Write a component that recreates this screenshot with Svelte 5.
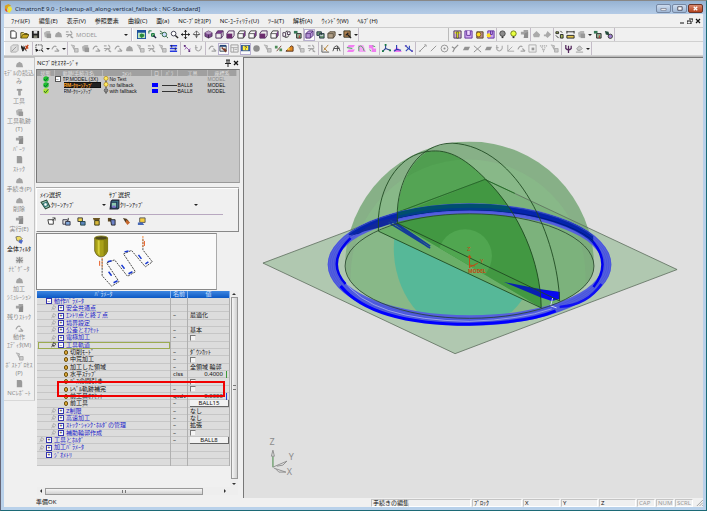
<script>
  const icons = {
    doc: '<path d="M2 1h4l2 2v6H2z" fill="#fff" stroke="#222"/>',
    open: '<path d="M1 9V3h3l1 1h3v2" fill="#ffe870" stroke="#443a00"/><path d="M1 9l2-4h7L8 9z" fill="#c8a820" stroke="#443a00" stroke-width=".8"/>',
    save: '<path d="M1 1h8v8H1z" fill="#222"/><path d="M3 1h4v3H3z" fill="#ddd"/><path d="M3 6h4v3H3z" fill="#887"/>',
    gcube: '<path d="M1 3l3-2h4v4L6 8H2z" fill="#b4b4b4"/><path d="M4 4h5v5H4z" fill="#989898"/>',
    gblob: '<path d="M1 7l1-3 3-2 3 2 1 4H2z" fill="#a4a4a4"/>',
    ggrid: '<path d="M1 2h3M6 1l2 3M1 5h7M2 8l3-3 4 4M7 6v3" stroke="#a8a8a8" fill="none" stroke-width="1.3"/>',
    gtool: '<path d="M1 1l4 1-1 4M3 3l3 4M5 5h4v4H5z" stroke="#aaa" fill="#ccc"/>',
    gcurve: '<path d="M1 6q2-5 5-3M4 8h5M6 5l3 3" stroke="#a2a2a2" fill="none" stroke-width="1.3"/>',
    fit: '<path d="M0 0h10v10H0z" fill="#1b4f9c"/><path d="M1 3h8v6H1z" fill="#bfe6bf"/><path d="M3 5l2-1 3 1v2L5 9 3 7z" fill="#288a3c"/>',
    zoomin: '<path d="M1 1h3M1 1v3M4 4h3v3H4z" stroke="#063" fill="#8c8"/><path d="M6 6l3 3" stroke="#224" stroke-width="1.5"/>',
    zoomall: '<circle cx="6" cy="5" r="2.5" fill="#cdf" stroke="#286038"/><path d="M1 1l3 2M8 7l2 2M1 4h2" stroke="#286038"/>',
    zoom: '<circle cx="4" cy="4" r="2.6" fill="#fff" stroke="#334"/><path d="M6 6l3 3" stroke="#222" stroke-width="1.5"/>',
    pan: '<path d="M5 0v10M0 5h10" stroke="#222"/><path d="M5 0L3 2h4zM5 10L3 8h4zM0 5l2-2v4zM10 5L8 3v4z" fill="#222"/>',
    rotate: '<path d="M5 1v8M1 5h8M2 4l3-3 3 3-3 4z" stroke="#444" fill="#fff" stroke-width=".8"/>',
    cube: '<path d="M5 1l4 2v4L5 9 1 7V3z" fill="#7b4a8e" stroke="#2c1738" stroke-width=".7"/><path d="M5 1l4 2-4 2-4-2z" fill="#b79ac4"/><path d="M5 5v4" stroke="#2c1738" stroke-width=".7"/>',
    cubet: '<path d="M1 4l2-3h6v5L7 9H1z" fill="#eee" stroke="#4a2858"/><path d="M1 4l2-3h6L7 4z" fill="#7b3a8e" stroke="#4a2858" stroke-width=".5"/><path d="M7 4v5" stroke="#4a2858"/>',
    cubef: '<path d="M1 4l2-3h6v5L7 9H1z" fill="#eee" stroke="#4a2858"/><path d="M1 4h6v5H1z" fill="#6b2a6e"/>',
    cuber: '<path d="M1 4l2-3h6v5L7 9H1z" fill="#fafafa" stroke="#333"/><path d="M7 4l2-3v5L7 9z" fill="#7b3a8e"/><path d="M1 4h6v5" fill="none" stroke="#333" stroke-width=".8"/>',
    shade: '<path d="M1 4l3-3h5v5L6 9H1z" fill="#b594d6" stroke="#4b2b70"/><path d="M1 4h5v5M6 4l3-3" fill="none" stroke="#4b2b70" stroke-width=".8"/>',
    swap: '<path d="M1 3h3v4H1zM6 2h3v3H6z" fill="#fff" stroke="#423048"/><path d="M3 8q3 1 5-2M4 2l2-1" fill="none" stroke="#222"/>',
    layers: '<path d="M1 2h5v4H1zM4 4h5v5H4z" fill="#6d9a74" stroke="#234"/><path d="M4 6h4" stroke="#dde"/>',
    box: '<path d="M1 4l2-2h6v4L7 9H1z" fill="#b0a088" stroke="#4d4436"/><path d="M1 4h6v5" fill="none" stroke="#4d4436" stroke-width=".8"/>',
    render: '<path d="M1 1h7v7H1z" fill="#b08050" stroke="#332"/><path d="M3 6l3-3M5 5l4 4" stroke="#222" stroke-width="1.4"/>',
    u1: '<path d="M1 1h8v8H1z" fill="#c9a2d0" stroke="#4c3458"/><path d="M2 2h6v2H2z" fill="#e7e42a"/><path d="M4 2h2v7H4z" fill="#e7e42a" stroke="#222" stroke-width=".6"/>',
    u2: '<path d="M1 1h8v8H1z" fill="#d0a6f0" stroke="#5c2c98"/><path d="M3 1v5h4V1" fill="#f2d8ff" stroke="#5c2c98"/>',
    u3: '<path d="M2 2h7v7H2z" fill="#b88" stroke="#542"/><circle cx="4" cy="5" r="2.5" fill="#fd2" stroke="#641" stroke-width=".7"/>',
    u4: '<path d="M2 1h7v8H2z" fill="#c7a0f0" stroke="#5c2c98"/><circle cx="3" cy="6" r="2.3" fill="#fd2"/><path d="M5 1v4h2V1" stroke="#5c2c98" fill="none"/>',
    bulboff: '<circle cx="5" cy="4" r="3" fill="#8c8c8c" stroke="#444"/><path d="M4 7h2v2H4z" fill="#333"/>',
    bulb: '<circle cx="5" cy="4" r="3" fill="#e8ff40" stroke="#6a7a10"/><path d="M4 7h2v2H4z" fill="#333"/>',
    lamp: '<circle cx="5" cy="4" r="3.4" fill="#ffe860" stroke="#a07808"/><path d="M4 8h2v2H4z" fill="#543"/>',
    gleft: '<path d="M1 5l4-4 4 4-1 3H2z" fill="#aaa"/>',
    gright: '<path d="M1 5h2l2-4 4 4-4 4-2-2H1z" fill="#aaa"/>',
    meas: '<path d="M1 2h3v2H1zM6 1l2 2M1 6l3 3M6 5h3v4H6z" stroke="#222" fill="#a7b85a"/>',
    dim: '<path d="M1 1v3M9 1v3M1 2h8M1 6h8v3H1z" stroke="#222" fill="#e3c44a"/>',
    tree1: '<path d="M1 1h4v3H1z" fill="#375"/><path d="M4 4h5v5H4z" fill="#9b9" stroke="#222"/><path d="M7 6v3" stroke="#b22"/>',
    tree2: '<path d="M1 1l4 1 1 4-4-1z" fill="#234a3a"/><circle cx="7" cy="7" r="2.4" fill="#a080d0" stroke="#333"/>',
    cursorx: '<path d="M0 2l4 3-2 3zM3 2l3 6" fill="#222" stroke="#222"/><path d="M5 2l3 3M8 1L5 6" stroke="#c43c10" stroke-width="1.4"/>',
    select: '<path d="M1 1h7v6H1z" fill="none" stroke="#333" stroke-dasharray="1.5 1"/><path d="M1 5v4l3-2z" fill="#111"/><path d="M7 6l2 3" stroke="#111"/>',
    bars: '<path d="M1 2h8M1 5h8M1 8h8" stroke="#2438e0" stroke-width="1.8"/><path d="M3 1v3M7 4v3" stroke="#223"/>',
    graph: '<path d="M1 2l3 2-2 2M4 4l3 3 1-2" fill="none" stroke="#8d51ac"/><path d="M1 1h2v2H1zM6 7h2v2H6z" fill="#62327e"/>',
    tbl: '<path d="M1 1h8v8H1z" fill="#eee" stroke="#999"/><path d="M1 4h8M4 4v5M5 6h3" stroke="#aaa"/>',
    editbox: '<path d="M1 2h7v6H1z" fill="#eee" stroke="#345"/><path d="M1 1h7v2H1z" fill="#247"/><path d="M3 4l5 5M6 5l2 3" stroke="#7b3a28" stroke-width="1.6"/>',
    help: '<path d="M0 1h10v7H0z" fill="#345a9e"/><path d="M2 2h6v5H2z" fill="#ffec40"/><path d="M4 3h2v1L5 5M5 6v.6" stroke="#222" fill="none" stroke-width=".8"/>',
    gball: '<circle cx="5" cy="5" r="3.6" fill="#8e8e8e"/>',
    link: '<path d="M1 2h3v3H1zM6 5h3v3H6z" fill="#4d8b58"/><path d="M3 8l5-6" stroke="#743"/>',
    wedge: '<path d="M1 8l6-6 2 1v5H1z" fill="#e08820" stroke="#532"/><path d="M2 6l3-3v4z" fill="#f8cf4c"/>',
    sketch: '<path d="M1 1v8h8" stroke="#555" fill="none"/><path d="M3 7l5-6M3 4l4 4" stroke="#b07a28"/>',
    arcs: '<path d="M1 8q1-6 4-6t4 6M2 5h6M6 2v6" stroke="#444" fill="none"/>',
    pink1: '<path d="M3 1h7L8 4H1zM3 6h7L8 9H1z" fill="#f27df2"/><path d="M1 4l6 1" stroke="#32a050"/>',
    pink2: '<path d="M1 1h6l3 8H2z" fill="#f6a6f6"/><path d="M2 3q4-3 6 5M2 3v5" stroke="#4ba75a" fill="none"/>',
    pink3: '<path d="M1 1h5v4H1zM4 5h5v4H4z" fill="#f07df0"/><path d="M5 2l3 1M2 6l1 2" stroke="#4ba75a"/>',
    ax1: '<path d="M4 1v4L1 8M4 5l5 2" stroke="#284090" fill="none" stroke-width="1.2"/><path d="M3 0h2v2H3zM0 7h2v2H0zM8 6h2v2H8z" fill="#167a40"/>',
    ax2: '<path d="M1 6l4-2 5 5H2z" fill="#f27df2"/><path d="M4 1v5L1 8M4 6l5 1" stroke="#2438b0" fill="none" stroke-width="1.2"/>',
    ax3: '<path d="M2 2l3 3-3 3M5 5l4 3M6 2v3" stroke="#3048b8" fill="none" stroke-width="1.2"/><path d="M1 1h2v2H1zM8 7h2v2H8z" fill="#6858c0"/>',
    gline: '<path d="M2 8l6-6M7 1h2v2M1 8h2" stroke="#8e8e8e" fill="none"/>',
    gslash: '<path d="M2 8l6-6" stroke="#8e8e8e"/>',
    gcirc: '<circle cx="5" cy="5" r="3.8" fill="none" stroke="#8e8e8e"/><circle cx="5" cy="5" r="1.2" fill="#8e8e8e"/>',
    gbox: '<path d="M1 3l2-2h6v6L7 9H1z" fill="#ddd" stroke="#aaa"/><path d="M2 8l5-5" stroke="#999"/>',
    gy: '<path d="M1 3l3 2 4-4M4 5L2 9" stroke="#8e8e8e" fill="none" stroke-width="1.3"/>',
    gpar: '<path d="M3 3h6L7 7H1z" fill="#929292"/>',
    gx: '<path d="M1 2l8 7M9 2L1 9" stroke="#929292" stroke-width="1.1"/>',
    gu: '<path d="M2 1v5q3 4 6-1V2M1 4h3" stroke="#aaa" fill="none" stroke-width="1.2"/>',
    gaxis: '<path d="M2 1v7h7M2 8l5-5" stroke="#a6a6a6" fill="none"/>',
    gsq: '<path d="M1 1h8v8H1z" fill="none" stroke="#aaa"/><path d="M4 4h3v3H4z" fill="#999"/>',
    gdots: '<path d="M1 2h8M3 3l2 5 2-5" stroke="#aaa" fill="none" stroke-dasharray="1.4 .8" stroke-width="1.3"/>',
    psi: '<path d="M2 1v4q3 3 6 0V2M5 2v8" stroke="#53285c" fill="none" stroke-width="1.4"/>',
    bucket: '<path d="M2 5l3-3 3 3-2 2H3zM1 9h8" stroke="#999" fill="#ccc"/>',
    ham: '<path d="M2 1h6v2H2z" fill="#999"/><path d="M4 3h2v5H4z" fill="#aaa" stroke="#888" stroke-width=".6"/>',
    filt: '<path d="M1 1l4-1 3 3-3 3-3-1z" fill="#f0dc60" stroke="#444" stroke-width=".7"/><path d="M5 4l4 1-2 4-3-2z" fill="#4d69c8"/>',
    gstar: '<path d="M1 1h8v7H1z" fill="#ccc"/><path d="M5 1v7M1 5h8M2 2l6 5M8 2L2 7" stroke="#8a8a8a"/>',
    gpage: '<path d="M2 0h5l1 2v6H2z" fill="#9a9a9a"/>',
    gpart: '<path d="M1 2h3V0h5v6l-2 3-3-4H1z" fill="#a2a2a2"/><path d="M5 4l4-2v7H4z" fill="#8c8c8c"/>',
    n1: '<path d="M1 3h6v5H2z" fill="#fff" stroke="#333"/><path d="M6 4l3-3M6 1h3v3" stroke="#444" fill="none"/>',
    n2: '<path d="M1 3h5v5H1z" fill="#ddd" stroke="#334"/><path d="M4 5h5v4H4z" fill="#7fa6d8" stroke="#334"/><path d="M7 1v3" stroke="#333"/>',
    n3: '<path d="M1 1h5v4H1z" fill="#efd34b" stroke="#333"/><path d="M4 5h5v4H4z" fill="#5c86bd" stroke="#244"/>',
    n4: '<path d="M1 1h8L8 4H2z" fill="#6b5520"/><path d="M3 4h5v5H3z" fill="#d8b83a" stroke="#331"/>',
    n5: '<path d="M1 1h4v4H1z" fill="#5a4620"/><path d="M4 3h5v6H5z" fill="#6d83c8" stroke="#222"/>',
    n6: '<path d="M1 1l4 1 3 3-4 1z" fill="#4d3a20"/><path d="M5 3l4 3-3 3-2-3z" fill="#c6672c"/>',
    n7: '<path d="M3 1h6v5H3z" fill="#f4cd40" stroke="#555"/><path d="M1 6h5l2 3H1z" fill="#4669b8"/>',
    proc: '<path d="M1 3l5-2 3 6-4 2z" fill="#9fc7b2" stroke="#284838"/><path d="M3 4l3-1 1 3-3 1z" fill="#fff" stroke="#377"/>',
    proc2: '<path d="M2 2l1-1h6v7L8 9H1z" fill="#3d7b8c" stroke="#223"/><path d="M2 3h5v5H2z" fill="#8dc7ae" stroke="#235"/><path d="M3 6h3v2H3z" fill="#7d6ccb"/>',
    ok: '<circle cx="5" cy="5" r="4.6" fill="#20c030"/><path d="M2 5l2 3 5-6" fill="none" stroke="#063" stroke-width="1.4"/>',
    ok2: '<circle cx="5" cy="5" r="4.6" fill="#a8e830"/><path d="M2 5l2 3 5-6" fill="none" stroke="#253" stroke-width="1.4"/>'
  };

  const menus = ['ﾌｧｲﾙ(F)', '編集(E)', '表示(V)', '参照要素', '曲線(C)', '面(a)', 'NC-ﾌﾟﾛｾｽ(P)', 'NC-ﾕｰﾃｨﾘﾃｨ(U)', 'ﾂｰﾙ(T)', '解析(A)', 'ｳｨﾝﾄﾞｳ(W)', 'ﾍﾙﾌﾟ(H)'];

  // '*' marks a pressed button, '+' one with a drop-down arrow
  const files = [['doc', 'open', 'save']];
  const views = [
    ['fit', 'zoomin', 'zoomall', 'zoom', 'pan', 'rotate'],
    ['cube', 'cubet', 'cubef', 'cuber', 'cuber', 'cubef', 'cuber'],
    ['swap', 'tree1'],
    ['*shade', 'layers', '+box', '+render']
  ];
  const nc = [['u1', 'u2', 'u3', 'u4'], ['bulboff', 'bulb', 'gpart'], ['gleft', 'gright'], ['meas', 'dim', '+gcube', 'tree1', 'tree2']];
  const row2 = [
    ['gbox', 'cursorx'],
    ['+select', '+gcurve'],
    ['gtool', 'gcube', 'gcurve', 'ggrid', 'gcurve', 'gblob', 'gtool', 'ggrid', 'gtool', 'bars'],
    ['graph', 'gu'],
    ['gcurve', '*editbox', 'tbl', '*help', 'gball', 'gtool', 'link', 'wedge', 'gtool', 'ggrid'],
    ['sketch', 'arcs'],
    ['pink1', 'pink2', 'pink3'],
    ['ax1', 'ax2', 'ax3'],
    ['gline', 'gslash', 'gcirc', 'gy', 'gpar', 'gx', 'gpar', 'gu', 'gaxis', 'gcurve', 'gsq', 'gdots', 'gtool'],
    ['psi', '+bucket']
  ];

  const side = [
    ['gblob', 'ﾓﾃﾞﾙの読込', 'み'], ['ham', '工具'], ['gcube', '工具軌跡', '(T)'], ['gpart', 'ﾊﾟｰﾂ'],
    ['gpage', 'ｽﾄｯｸ'], ['gblob', '手続き(P)'], ['gblob', '削除'], ['gpart', '実行(E)'],
    ['filt', '全体ﾌｨﾙﾀ'], ['gstar', 'ﾅﾋﾞｹﾞｰﾀ'], ['gblob', '加工', 'ｼﾐｭﾚｰｼｮﾝ'], ['gpart', '残りｽﾄｯｸ'],
    ['gcurve', '動作', 'ｴﾃﾞｨﾀ(M)'], ['gtool', 'ﾎﾟｽﾄﾌﾟﾛｾｽ', '(P)'], ['gpage', 'NCﾚﾎﾟｰﾄ']
  ];

  const procs = [
    { st: 'ok', name: 'TP,MODEL (3X)', lamp: 'lamp', note: 'No Text', tool: '', ucs: 'MODEL', root: true },
    { st: 'ok', name: 'RM-ｸﾘｰﾝｱｯﾌﾟ', lamp: 'lamp', note: 'no fallback', tool: 'BALL8', ucs: 'MODEL', sel: true },
    { st: 'ok2', name: 'RM-ｸﾘｰﾝｱｯﾌﾟ', lamp: 'bulboff', note: 'with fallback', tool: 'BALL8', ucs: 'MODEL' }
  ];

  // l: depth, k: + closed, - open, o leaf; u: unit column; v: value; c: tick box; b: button
  const params = [
    { l: 0, k: '-', n: '動作ﾊﾟﾗﾒｰﾀ' },
    { l: 1, k: '+', n: '安全共通点' },
    { l: 1, k: '+', n: 'ｴﾝﾄﾘ点と終了点', u: '–', v: '最適化' },
    { l: 1, k: '+', n: '境界設定' },
    { l: 1, k: '+', n: '公差とｵﾌｾｯﾄ', u: '–', v: '基本' },
    { l: 1, k: '+', n: '電極加工', u: '–', c: true },
    { l: 1, k: '-', n: '工具軌道', focus: true },
    { l: 2, k: 'o', n: '切削ﾓｰﾄﾞ', u: '–', v: 'ﾀﾞｳﾝｶｯﾄ' },
    { l: 2, k: 'o', n: '中荒加工', u: '–', c: true },
    { l: 2, k: 'o', n: '加工した領域', u: '–', v: '全領域 輪郭' },
    { l: 2, k: 'o', n: '水平ｽﾃｯﾌﾟ', u: 'clss', v: '0.4000', num: 'green' },
    { l: 2, k: 'o', n: 'ﾊﾟｽの間引き', u: '–', c: true },
    { l: 2, k: 'o', n: 'ﾚﾍﾞﾙ軌跡補完', u: '–', c: true, mark: true },
    { l: 2, k: 'o', n: '前工具ｵﾌｾｯﾄ', u: 'qcdv', v: '0.0000', num: 'blue' },
    { l: 2, k: 'o', n: '前工具', u: '–', b: 'BALL15' },
    { l: 1, k: '+', n: 'Z制限', u: '–', v: 'なし' },
    { l: 1, k: '+', n: '高速加工', u: '–', v: 'なし' },
    { l: 1, k: '+', n: 'ｽﾄｯｸ･ｼｬﾝｸ･ﾎﾙﾀﾞの管理', u: '–', v: '拡張' },
    { l: 1, k: '+', n: '補助輪郭作成', u: '–', c: true },
    { l: 0, k: '+', n: '工具とﾎﾙﾀﾞ', u: '–', b: 'BALL8', pin: true },
    { l: 0, k: '+', n: '加工ﾊﾟﾗﾒｰﾀ', pin: true },
    { l: 0, k: '+', n: 'ｼﾞｵﾒﾄﾘ' }
  ];

  const rings = [136, 138, 140, 142];
  let picked = $state('ｸﾘｰﾝｱｯﾌﾟ');
</script>

{#snippet icon(name)}
  <svg class="ic" viewBox="0 0 10 10" aria-hidden="true">{@html icons[name]}</svg>
{/snippet}

{#snippet groups(list)}
  {#each list as g}
    <div class="group">
      {#each g as raw}
        {@const name = raw.replace(/[*+]/, '')}
        <button class="tb" class:on={raw[0] === '*'} class:drop={raw[0] === '+'} aria-label={name}>
          {@render icon(name)}
          {#if raw[0] === '+'}<i class="arrow"></i>{/if}
        </button>
      {/each}
    </div>
  {/each}
{/snippet}

<div class="window">
  <header class="title">
    <svg class="logo" viewBox="0 0 10 10" aria-hidden="true"><path d="M1 2l4-2 3 2-3 1-2 3 1 3-3-2z" fill="#d8a020" /><path d="M4 3l4 0 1 3-3 4-3-2 2-2z" fill="#f0e838" /><path d="M1 5l2 1 1 3-2-1z" fill="#e04830" /></svg>
    <h1>CimatronE 9.0 - [cleanup-all_along-vertical_fallback : NC-Standard]</h1>
    <div class="winbtns">
      <button aria-label="minimize"><svg viewBox="0 0 14 8"><path d="M4 4h6v2H4z" fill="#fff" stroke="#556" stroke-width=".6" /></svg></button>
      <button aria-label="maximize"><svg viewBox="0 0 14 8"><path d="M5 2h5v4H5z" fill="#fff" stroke="#445" /></svg></button>
      <button class="close" aria-label="close"><svg viewBox="0 0 14 8"><path d="M5 2l4 4M9 2L5 6" stroke="#fff" stroke-width="1.5" /></svg></button>
    </div>
  </header>

  <div class="client">
    <nav class="menu">
      {#each menus as m}<button>{m}</button>{/each}
      <div class="mdi">
        <button aria-label="minimize document"><svg viewBox="0 0 6 6"><path d="M1 5h4" stroke="#111" /></svg></button>
        <button aria-label="restore document"><svg viewBox="0 0 6 6"><path d="M2 1h4v3M0 3h4v3H0z" fill="none" stroke="#111" /></svg></button>
        <button aria-label="close document"><svg viewBox="0 0 6 6"><path d="M1 1l4 4M5 1L1 5" stroke="#111" stroke-width="1.2" /></svg></button>
      </div>
    </nav>

    <div class="bar first">
      <div class="band">{@render groups(files)}
        <div class="group">
          {#each ['gcube', 'gblob', 'ggrid'] as n}<button class="tb" disabled aria-label={n}>{@render icon(n)}</button>{/each}
          <div class="combo">
            <select aria-label="UCS" disabled><option>MODEL</option></select><i class="arrow"></i>
          </div>
        </div>
      </div>
      <div class="band">{@render groups(views)}</div>
      <div class="band far">{@render groups(nc)}</div>
    </div>
    <div class="bar second">
      <div class="band">{@render groups(row2)}</div>
    </div>

    <main>
      <aside class="side">
        {#each side as [ic, a, b], i}
          <button class:live={i === 8}>{@render icon(ic)}<span>{a}</span>{#if b}<span>{b}</span>{/if}</button>
        {/each}
      </aside>

      <section class="dock">
        <div class="dockhead">
          <h2>NCﾌﾟﾛｾｽﾏﾈｰｼﾞｬ</h2>
          <svg viewBox="0 0 16 8" aria-hidden="true"><path d="M2 1h4M3 1v3M5 1v3M1 4.5h6M4 5v3" stroke="#222" fill="none" /><path d="M10 2l4 4M14 2l-4 4" stroke="#111" stroke-width="1.3" /></svg>
        </div>
        <div class="list">
          <table>
            <thead><tr><th class="c1">状態</th><th class="c2">軌跡/手続き名</th><th class="c3">ｺﾒﾝﾄ</th><th class="c4">ロ</th><th class="c5">ﾊﾟﾗ</th><th class="c6">工具</th><th>座標系</th></tr></thead>
            <tbody>
              {#each procs as p}
                <tr>
                  <td class="c1">{@render icon(p.st)}</td>
                  <td class="c2"><div class="pn">{#if p.root}<i class="box">−</i>{/if}<span class:root={p.root} class:sel={p.sel}>{p.name}</span></div></td>
                  <td class="c3"><div class="note">{@render icon(p.lamp)}{p.note}</div></td>
                  <td>{#if p.tool}<i class="swatch"></i>{/if}</td>
                  <td>{#if p.tool}<i class="dash"></i>{/if}</td>
                  <td>{p.tool}</td>
                  <td class:dim={p.root}>{p.ucs}</td>
                </tr>
              {/each}
            </tbody>
          </table>
        </div>

        <div class="choose">
          <div class="picks">
            <div class="pick">
              <label for="main-pick">ﾒｲﾝ選択</label>
              <div class="field">{@render icon('proc')}<select id="main-pick" bind:value={picked}><option>ｸﾘｰﾝｱｯﾌﾟ</option></select><i class="arrow"></i></div>
            </div>
            <div class="pick wide">
              <label for="sub-pick">ｻﾌﾞ選択</label>
              <div class="field">{@render icon('proc2')}<select id="sub-pick" bind:value={picked}><option>ｸﾘｰﾝｱｯﾌﾟ</option></select><i class="arrow"></i></div>
            </div>
          </div>
          <div class="actions">
            {#each ['n1', 'n2', 'n3', 'n4', 'n5', 'n6', 'n7'] as n}<button class="tb" aria-label={n}>{@render icon(n)}</button>{/each}
          </div>
        </div>

        <div class="preview">
          <svg viewBox="38 233 180 55" role="img" aria-label="toolpath preview">
            <path d="M96 237v13q2 6 6.500 6t6.500-6v-13z" fill="#a8a018" stroke="#4f4a08" stroke-width=".7" />
            <path d="M99 237v15l2 3v-18z" fill="#d6cf3a" />
            <path d="M105 238h4v12l-4 5z" fill="#8b8410" />
            <ellipse cx="102.500" cy="237" rx="6.500" ry="2" fill="#4e4a20" stroke="#8b8410" stroke-width=".8" />
            <path d="M103.500 258V275L113 285.500 120.500 281 108 262 116 259 129 275.500 137 271 125 253 133 249.500 147 266 154 261 144.500 249V237" fill="none" stroke="#333" stroke-width=".9" stroke-dasharray="2 1" />
            <path d="M103.500 257v10M144.500 235v12" stroke="#f48a40" stroke-dasharray="2 1" /><path d="M101 260v5M146 240v5" stroke="#e85a20" />
            <path d="M109 261l4-1M126 251l4-1M110 271l3 4M115 282l4-2M123 264l3 4M130 273l4-2M140 254l3 4M147 263l3-2" stroke="#1838d0" stroke-width="1.500" />
          </svg>
        </div>

        <div class="tree">
          <div class="treebody">
            <table>
              <thead><tr><th class="p1">ﾊﾟﾗﾒｰﾀ</th><th class="p2">名前</th><th>値</th></tr></thead>
              <tbody>
                {#each params as p, i}
                  <tr class:leaf={p.l === 2}>
                    <td class="p1">
                      <div class="name l{p.l}" class:focus={p.focus}>
                        {#if p.l === 1 || p.pin}<svg class="pin" class:dark={p.focus} viewBox="0 0 6 6" aria-hidden="true"><path d="M0 6l2-2M1 3l3 2M3 0l3 2-2 2-2-1z" fill="none" stroke="currentColor" /></svg>{/if}
                        {#if p.k === 'o'}<i class="knob"></i>{:else}<i class="box blue">{p.k === '+' ? '+' : '−'}</i>{/if}
                        <label for={'v' + i}>{p.n}</label>
                      </div>
                      {#if p.mark}<div class="mark"></div>{/if}
                    </td>
                    <td>{p.u ?? ''}</td>
                    <td>
                      {#if p.c}<input id={'v' + i} type="checkbox" />
                      {:else if p.b}<button id={'v' + i} class="val">{p.b}</button>
                      {:else if p.num}<output id={'v' + i} class="num {p.num}">{p.v}</output>
                      {:else}<output id={'v' + i}>{p.v ?? ''}</output>{/if}
                    </td>
                  </tr>
                {/each}
                <tr class="leaf"><td></td><td></td><td></td></tr>
              </tbody>
            </table>
            <div class="vscroll"><i class="up"></i><div class="thumb"><span></span></div><i class="down"></i></div>
          </div>
          <div class="hscroll"><i class="left"></i><div class="thumb"><span></span></div><i class="right"></i></div>
        </div>
      </section>

      <section class="view">
        <svg viewBox="244 57 459 442" role="img" aria-label="3D view">
          <defs>
            <clipPath id="dome"><path d="M344.500 266a125 125 0 0 1 250 0a125 53 0 0 1-250 0z" /></clipPath>
            <clipPath id="cut"><path d="M397 223C397 190 408 163 427 151C450 147 468 161 485 178C520 212 541 262 541.500 308L397 223z" /></clipPath>
            <clipPath id="back"><path d="M348 140h246v112l-60-20L378 231l-30 4z" /></clipPath>
          </defs>
          <path d="M262 263L455 354 678 269.500 485 179z" fill="#b0c8b0" />
          <g clip-path="url(#dome)">
            <path d="M340 136h260v190H340z" fill="#87b087" />
            <circle cx="468" cy="277" r="118" fill="#88b888" />
            <path d="M378 231L485 179 678 269.500 560 303z" fill="#6cab6c" opacity=".4" />
            <path d="M394 238C391 265 400 294 418 313Q440 319 470 319Q500 318 512 312Q518 306 523 299z" fill="#56b898" />
          </g>
          <path d="M397 223L560 301 541.500 308 378 231z" fill="#6aaf68" />
          <path d="M397 223C397 190 408 163 427 151C450 147 468 161 485 178C520 212 541 262 541.500 308L541 292z" fill="#509e50" />
          <g clip-path="url(#cut)">
            <circle cx="468" cy="277" r="118" fill="#54a454" />
            <path d="M378 222L485 179 678 269.500 541 310z" fill="#429842" />
            <circle cx="465" cy="256" r="27" fill="#50a650" />
          </g>
          <path d="M262 263L455 354 678 269.500 485 179z" fill="none" stroke="#5c6c5c" stroke-width=".8" />
          <path d="M397 212L485 179 515 193" fill="none" stroke="#1d7020" stroke-width=".9" />

          <path fill-rule="evenodd" d="M327 264.500a142.500 61.500 0 0 1 285 0a142.500 61.500 0 0 1-285 0zM336 264.500a133.500 51 0 0 0 267 0a133.500 51 0 0 0-267 0z" fill="#5560dc" />
          {#each rings as r}
            <ellipse cx="469.500" cy="264.500" rx={r} ry={r - 82} fill="none" stroke="#2838e0" stroke-width=".5" opacity=".6" />
          {/each}
          <path d="M340 286Q372 324.500 469.500 324.500Q528 323 556 311" fill="none" stroke="#0000ff" stroke-width="3" />
          <path d="M343 280Q370 320.500 469.500 321.500Q520 320 552 309" fill="none" stroke="#c8d0ee" stroke-width=".6" />
          <path d="M350 238Q325 262 345 284M590 238Q614 262 594 287" fill="none" stroke="#0000ee" stroke-width="2.500" />
          <path d="M560 307q28-2 42-23" fill="none" stroke="#1010f4" stroke-width="2.500" />
          <g clip-path="url(#back)">
            <ellipse cx="469.500" cy="264.500" rx="138.500" ry="57.500" fill="none" stroke="#0524ac" stroke-width="6" />
            <ellipse cx="469.500" cy="264.500" rx="141" ry="60.500" fill="none" stroke="#3048b8" stroke-width="1" />
            <ellipse cx="469.500" cy="264.500" rx="138" ry="55" fill="none" stroke="#001b80" stroke-width="1" />
          </g>
          <g clip-path="url(#cut)">
            <ellipse cx="469.500" cy="264.500" rx="139" ry="58" fill="none" stroke="#00506e" stroke-width="6" />
            <ellipse cx="469.500" cy="264.500" rx="139" ry="56" fill="none" stroke="#004088" stroke-width="2" />
          </g>
          <path d="M347 237l31-16 18-4 2 4-18 6-20 5z" fill="#10289c" />
          <path d="M388 222l42 26M390 220l38 27M393 221l37 25" stroke="#143c98" stroke-width="1.600" fill="none" />
          <path d="M504 282l36 7 20 3v6l-20-1z" fill="#0820b0" />
          <path d="M540 290l20 2v7l-8 2-12-4z" fill="#0808f0" />
          <path d="M553 298l-2 8 6 2" stroke="#cdd6f8" fill="none" />

          <ellipse cx="469.500" cy="266" rx="125" ry="52.500" fill="none" stroke="#24402a" stroke-width=".8" />
          <path d="M541.500 308L378 231V217C381 180 402 154 427 151C450 147 468 161 485 178C520 212 541 262 541.500 308zM560 301L397 223V210C399 176 418 143 452 142.500C520 146 558 240 560 301z" fill="none" stroke="#1f4a22" stroke-width=".9" />

          <g fill="#c24a14" font-size="6"><text x="467" y="251">Z</text><text x="480" y="263">Y</text><text x="468" y="273" font-size="5" font-weight="bold">MODEL</text></g>
          <path d="M469.500 268v-12M468 258l1.500-3 1.500 3M470 267l8-4M470 265l5 1" stroke="#c24a14" fill="none" />

          <g fill="#8c8c8c" font-size="9"><text x="268.500" y="446">Z</text><text x="288" y="461">Y</text><text x="286" y="476">X</text></g>
          <path d="M272 468v-11" stroke="#77a477" stroke-width="1.500" />
          <path d="M270.500 457l1.500-6 1.500 6zM272 468l7-3 7-3-4 4-6 1M273 469l12 4-7 0-3-3" stroke="#808080" fill="#e0e0e0" stroke-width=".8" />
        </svg>
      </section>
    </main>

    <footer>
      <span class="ready">準備OK</span>
      <span class="s1">手続きの編集</span><span class="s2">ﾌﾞﾛｯｸ</span><span class="s3">X</span><span class="s3">Y</span><span class="s3">Z</span>
      <span class="key">CAP</span><span class="key">NUM</span><span class="key">SCRL</span>
      <svg class="grip" viewBox="0 0 8 8" aria-hidden="true"><path d="M1 8l7-7M4 8l4-4M7 8l1-1" stroke="#999" /></svg>
    </footer>
  </div>
</div>

<style>
  :global(body) { background: #b9d1ea; }
  .window { min-height: 100vh; box-sizing: border-box; display: flex; flex-direction: column; padding: 0 3px 3px; border: 1px solid #1c6a76; border-top-color: #888; border-left-color: #667; background: #b9d1ea; font: 6px/8px "Noto Sans", "Noto Sans CJK JP", sans-serif; color: #111; }
  button, select, input { font: inherit; color: inherit; margin: 0; padding: 0; border: 0; background: none; }
  h1, h2 { margin: 0; font: inherit; }
  i { font-style: normal; }
  .ic { width: 9px; height: 9px; display: block; flex: none; }
  .title { display: flex; align-items: center; height: 13px; margin: 0 -3px; padding: 2px 3px 0; box-sizing: border-box; background: linear-gradient(#96b2d2, #a9c3e0 60%, #b4cbe6); }
  .logo { width: 9px; height: 9px; margin-right: 2px; }
  h1 { flex: 1; color: #1c2a3c; }
  .winbtns { display: flex; gap: 1px; align-self: flex-start; padding-top: 1px; }
  .winbtns button { width: 15px; height: 9px; border: 1px solid #7688a4; border-radius: 2px; background: linear-gradient(#cddcee, #9fb6d4); display: flex; }
  .winbtns .close { background: linear-gradient(#d98a70, #b3421e); border-color: #6a3428; }
  .winbtns svg { width: 13px; height: 7px; }
  .client { flex: 1; display: flex; flex-direction: column; background: #f0f0f0; }
  .menu { display: flex; align-items: center; gap: 9px; height: 13px; padding-left: 7px; border-bottom: 1px solid #ccc; }
  .mdi { margin-left: auto; display: flex; gap: 2px; padding-right: 2px; }
  .mdi button { width: 6px; height: 6px; }
  .mdi svg { width: 6px; height: 6px; display: block; }
  .bar { display: flex; height: 13px; border-bottom: 1px solid #d0d0d0; }
  .band { display: flex; padding-left: 3px; border-left: 1px solid #fff; }
  .far { margin-left: auto; margin-right: 88px; border-left: 1px solid #bbb; }
  .group { display: flex; align-items: center; border-right: 1px solid #c4bcc8; }
  .second .group { padding: 0 1px; }
  .tb { width: 11px; height: 12px; display: flex; align-items: center; justify-content: center; }
  .tb.on { background: #fbfbfb; box-shadow: inset 0 0 0 1px #b8b0d0; }
  .tb.drop { width: 16px; gap: 2px; }
  .arrow { flex: none; border: 2px solid transparent; border-top-color: #222; border-bottom: 0; width: 0; height: 0; }
  .combo { display: flex; align-items: center; width: 56px; height: 10px; padding-right: 3px; box-sizing: border-box; }
  .combo select { flex: 1; appearance: none; color: #999; opacity: 1; padding-left: 1px; }
  main { flex: 1; display: flex; min-height: 0; border-top: 1px solid #bbb; }
  .side { width: 30px; flex: none; align-self: flex-start; display: flex; flex-direction: column; padding: 2px 0 0; border: 1px solid #c4c4c4; border-left: 0; border-bottom-color: #d8d8d8; }
  .side button { display: flex; flex-direction: column; align-items: center; color: #8c8c8c; padding-bottom: 3px; white-space: nowrap; }
  .side .live { color: #111; }
  .dock { width: 206px; flex: none; display: flex; flex-direction: column; margin-left: 1px; }
  .dockhead { display: flex; justify-content: space-between; align-items: center; height: 12px; padding: 0 2px 0 1px; }
  .dockhead svg { width: 16px; height: 8px; }
  .list { height: 112px; background: #c8c8c8; border: 1px solid #777; border-right-color: #aaa; border-bottom-color: #999; margin-right: 2px; }
  table { border-collapse: collapse; table-layout: fixed; width: 100%; }
  th, td { padding: 0; font-weight: normal; white-space: nowrap; }
  td { text-align: left; }
  .list table { font-family: "Liberation Sans", "Noto Sans CJK JP", sans-serif; font-size: 5px; line-height: 6px; width: 200px; }
  .list th { background: #a0a0a0; color: #e0e0e0; border-right: 1px solid #b8b8b8; height: 6px; overflow: hidden; }
  .list tbody td { height: 6px; }
  .list .c1 { width: 17px; }
  .list .c1 .ic { width: 8px; height: 6px; margin-left: 5px; }
  .list .c2 { width: 47px; }
  .list .c3 { width: 48px; }
  .list .c4 { width: 9px; }
  .list .c5 { width: 15px; }
  .list .c6 { width: 29px; }
  .pn { display: flex; gap: 2px; align-items: center; }
  .pn span { margin-left: 9px; width: 37px; overflow: hidden; }
  .pn .root { margin-left: 0; }
  .pn .sel { background: #222; box-shadow: inset 0 0 0 1px #111; color: #ffa020; font-weight: bold; }
  .note { display: flex; gap: 1px; align-items: center; }
  .note .ic { width: 6px; height: 6px; }
  .swatch { display: block; width: 6px; height: 4px; background: #00f; }
  .dash { display: block; height: 1px; background: #333; margin-right: 1px; }
  .dim { color: #888; }
  .box { flex: none; width: 4px; height: 4px; border: 1px solid #555; background: #fff; color: #111; font-size: 5px; line-height: 4px; text-align: center; }
  .box.blue { border-color: #3434b0; }
  .choose { margin: 5px 3px 0 0; padding: 2px 0 0 3px; height: 40px; border: 1px solid #fff; border-right-color: #888; border-bottom-color: #888; box-shadow: 0 -1px #aaa; }
  .picks { display: flex; gap: 3px; margin-right: 15px; padding-bottom: 4px; border-bottom: 1px solid #b8a8c0; }
  .pick { width: 66px; }
  .pick.wide { width: 89px; }
  .pick label { display: block; }
  .field { display: flex; align-items: center; height: 11px; }
  .field .ic { width: 11px; height: 11px; }
  .field select { flex: 1; min-width: 0; appearance: none; }
  .actions { display: flex; gap: 4px; padding-left: 6px; }
  .preview { width: 181px; margin-top: 1px; background: #fafafa; border: 1px solid #888; border-right-color: #aaa; box-sizing: border-box; }
  .preview svg { display: block; width: 100%; }
  .tree { flex: 1; display: flex; flex-direction: column; margin: 1px 4px 3px 1px; }
  .treebody { flex: 1; display: flex; align-items: flex-start; }
  .tree table { background: #dcdcdc; line-height: 7px; flex: 1; }
  .tree .p1 { width: 133px; }
  .tree .p2 { width: 16px; }
  .tree thead th { background: linear-gradient(#3d86e0, #0c58c4); color: #cfe0ff; height: 7px; border-right: 1px solid #88b4f0; }
  .tree tbody tr { height: 7px; }
  .tree tbody tr:nth-child(3n) { height: 8px; }
  .tree tbody td { border-right: 1px solid #b0b0b0; box-shadow: inset 0 -1px #c6c6c6; position: relative; padding-left: 2px; }
  .tree tbody .p1 { padding-left: 1px; }
  .name { display: flex; align-items: center; gap: 2px; color: #1a1ac8; height: 7px; }
  .leaf .name { color: #111; }
  .l0 { padding-left: 8px; }
  .l0:has(.pin) { padding-left: 1px; }
  .l1 { padding-left: 13px; }
  .l2 { padding-left: 26px; }
  .focus { box-shadow: inset 0 0 0 1px #9cab50; }
  .pin { width: 5px; height: 6px; color: #aaa; flex: none; }
  .pin.dark { color: #333; }
  .knob { width: 2px; height: 3px; border: 1px solid #6b5210; border-radius: 2px; background: #e0a838; }
  .mark { position: absolute; z-index: 2; left: 20px; top: -5px; width: 164px; height: 12px; border: 2px solid #f00000; }
  input[type="checkbox"] { appearance: none; display: block; width: 6px; height: 6px; box-sizing: border-box; background: #f4f4f4; border: 1px solid #777; border-right-color: #ddd; border-bottom-color: #ddd; }
  output { display: block; }
  .num { text-align: right; padding-right: 3px; margin-right: 2px; border-right: 1px solid #3b9a3b; }
  .num.blue { border-color: #2040e0; }
  .val { display: block; width: 39px; height: 7px; line-height: 6px; background: #f2f2f2; border-right: 1px solid #666; border-bottom: 1px solid #666; }
  .vscroll { align-self: stretch; width: 8px; display: flex; flex-direction: column; align-items: center; background: #eee; padding: 2px 0; gap: 2px; box-sizing: border-box; }
  .vscroll .thumb { flex: 1; width: 5px; margin-bottom: 2px; border: 1px solid #999; background: linear-gradient(90deg, #f6f6f6, #d0d0d0); display: flex; align-items: center; justify-content: center; }
  .vscroll .thumb span { width: 3px; height: 3px; border: 1px solid #777; border-width: 1px 0; }
  .hscroll { height: 8px; display: flex; align-items: center; background: #eee; gap: 3px; padding: 0 12px 0 3px; }
  .hscroll .thumb { flex: 1; max-width: 156px; height: 5px; border: 1px solid #999; background: linear-gradient(#f6f6f6, #d0d0d0); display: flex; align-items: center; justify-content: center; }
  .hscroll .thumb span { width: 2px; height: 3px; border: 1px solid #777; border-width: 0 1px; }
  .hscroll .right { margin-left: auto; }
  .up, .down, .left, .right { width: 0; height: 0; border: 2px solid transparent; }
  .up { border-bottom-color: #333; border-top: 0; }
  .down { border-top-color: #333; border-bottom: 0; }
  .left { border-right-color: #333; border-left: 0; }
  .right { border-left-color: #333; border-right: 0; }
  .view { flex: 1; min-width: 0; background: #e0e0e0; border-left: 1px solid #777; border-top: 1px solid #777; position: relative; margin-left: 1px; }
  .view svg { position: absolute; inset: 0; width: 100%; height: 100%; }
  footer { display: flex; align-items: center; gap: 1px; height: 9px; padding-left: 32px; }
  footer span { box-sizing: border-box; height: 8px; border: 1px solid #c4c4c4; border-right-color: #fff; border-bottom-color: #fff; line-height: 7px; padding-left: 1px; white-space: nowrap; }
  footer .ready { flex: 1; border: 0; padding-left: 0; }
  .s1 { width: 100px; }
  .s2 { width: 50px; }
  .s3 { width: 37px; }
  .key { width: 18px; color: #999; }
  .grip { width: 7px; height: 7px; margin-left: 2px; }
</style>
